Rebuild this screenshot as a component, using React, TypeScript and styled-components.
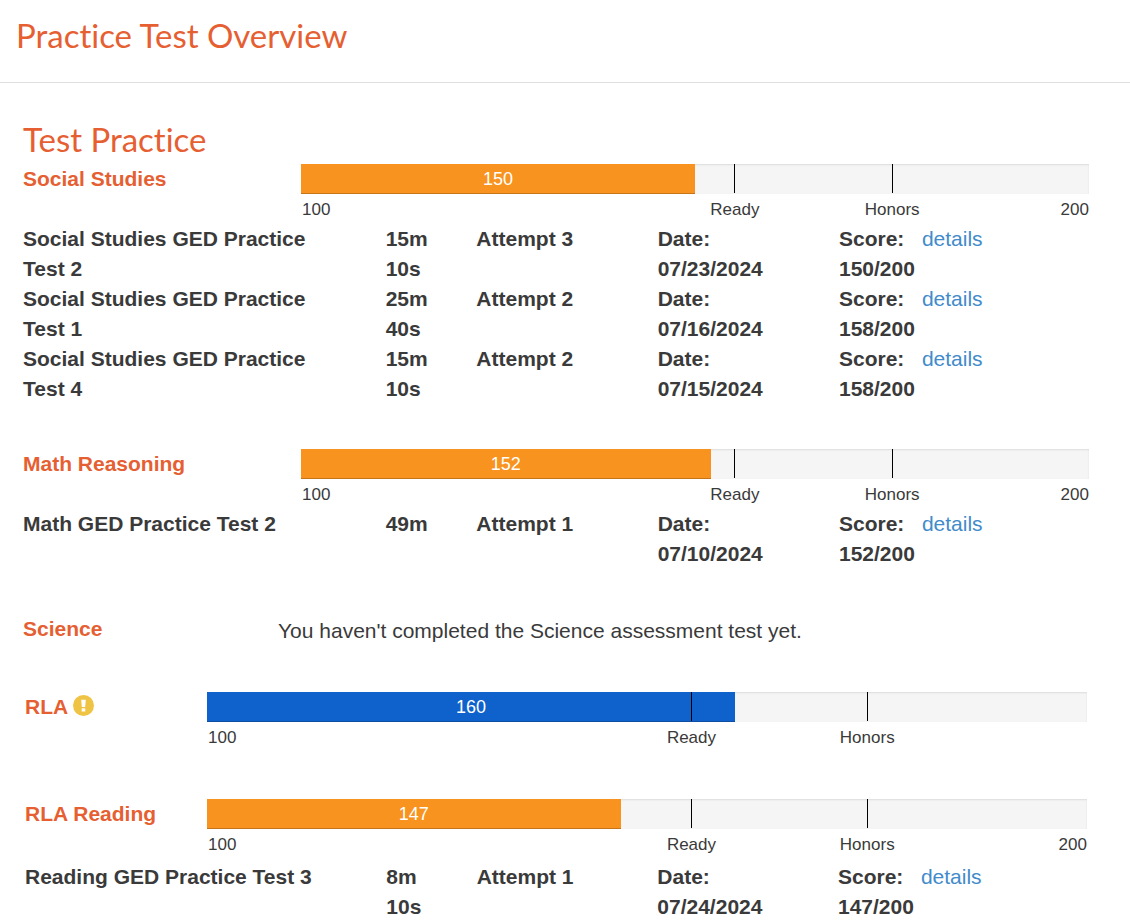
import React from "react";
import styled, { createGlobalStyle } from "styled-components";

const GlobalStyle = createGlobalStyle`
  *, *::before, *::after { box-sizing: border-box; }
  body {
    margin: 0;
    background: #fff;
    color: #3a3a3a;
    font-family: "Liberation Sans", Arial, sans-serif;
    font-size: 21px;
    line-height: 30px;
  }
`;

const Header = styled.header`
  padding: 15px 16px 27px;
  border-bottom: 1px solid #dfe0e1;
`;

const PageTitle = styled.h1`
  margin: 0;
  color: #e65f32;
  font-family: Lato, sans-serif;
  font-size: 33px;
  font-weight: 400;
  font-variant-ligatures: none;
  line-height: 40px;
`;

const Main = styled.main`
  padding: 36px 19px 0 23px;
`;

const SectionTitle = styled(PageTitle).attrs({ as: "h2" })`
  margin-bottom: 5px;
`;

const Subject = styled.section<{ $gap: number; $inset?: boolean }>`
  margin-bottom: ${(p) => p.$gap}px;
  padding: 0 ${(p) => (p.$inset ? 2 : 0)}px;

  &:last-child {
    margin-bottom: 0;
  }
`;

const SubjectHead = styled.div<{ $label: number; $below?: number }>`
  display: grid;
  grid-template-columns: ${(p) => p.$label}px 1fr;
  padding-right: 22px;
  margin-bottom: ${(p) => p.$below ?? 0}px;
`;

const SubjectName = styled.h3`
  display: flex;
  align-items: flex-start;
  gap: 5px;
  height: 30px;
  margin: 0;
  color: #e65f32;
  font-size: 21px;
  font-weight: 700;
  line-height: 30px;

  svg { margin-top: 3px; }
`;

const Message = styled.p`
  margin: 0;
  padding-top: 2px;
`;

const Track = styled.div`
  position: relative;
  height: 30px;
  background: #f5f5f5;
  box-shadow: inset 0 1px 2px rgba(0, 0, 0, 0.1);
`;

const Fill = styled.div<{ $tone: Tone }>`
  height: 100%;
  background: ${(p) => (p.$tone === "blue" ? "#0f62cb" : "#f7931e")};
  box-shadow: inset 0 -1px 0 rgba(0, 0, 0, 0.2);
  color: #fff;
  font-size: 18px;
  text-align: center;
`;

const Mark = styled.span<{ $at: number }>`
  position: absolute;
  top: 0;
  left: ${(p) => p.$at}%;
  width: 1px;
  height: 29px;
  background: #000;
`;

const Scale = styled.div`
  display: grid;
  grid-template-columns: 45% 20% 20% 15%;
  height: 30px;
  padding: 1px 0 0 1px;
  font-size: 17px;
  line-height: 29px;
  text-align: center;

  span:first-child { text-align: left; }
  span:last-child { text-align: right; }
`;

const Attempts = styled.table`
  width: 100%;
  table-layout: fixed;
  border-collapse: collapse;
  font-weight: 700;

  td {
    padding: 0;
    vertical-align: top;
  }
`;

const NameCell = styled.td`
  && { padding-right: 36px; }
`;

const TimeCell = styled.td`
  && { padding-right: 30px; }
`;

const Line = styled.span`
  display: block;
`;

const ScoreGroup = styled.div`
  display: flex;
  gap: 7px;
`;

const DetailsLink = styled.a`
  color: #428bca;
  font-weight: 400;
  text-decoration: none;

  &:hover { text-decoration: underline; }
`;

type Tone = "orange" | "blue";

interface Attempt {
  name: string;
  time: string;
  attempt: number;
  date: string;
  score: number;
}

function ScoreBar({ score, tone = "orange", showMax = true }: { score: number; tone?: Tone; showMax?: boolean }) {
  return (
    <div>
      <Track role="meter" aria-label="Score" aria-valuemin={100} aria-valuemax={200} aria-valuenow={score}>
        <Fill $tone={tone} style={{ width: `${score - 100}%` }}>{score}</Fill>
        <Mark $at={55} />
        <Mark $at={75} />
      </Track>
      <Scale>
        <span>100</span>
        <span>Ready</span>
        <span>Honors</span>
        <span>{showMax ? "200" : ""}</span>
      </Scale>
    </div>
  );
}

function AttemptTable({ rows }: { rows: Attempt[] }) {
  return (
    <Attempts>
      <colgroup>
        <col style={{ width: "33.333%" }} />
        <col style={{ width: "8.333%" }} />
        <col style={{ width: "16.667%" }} />
        <col style={{ width: "16.667%" }} />
        <col style={{ width: "25%" }} />
      </colgroup>
      <tbody>
        {rows.map((r) => (
          <tr key={r.name}>
            <NameCell>{r.name}</NameCell>
            <TimeCell>{r.time}</TimeCell>
            <td>Attempt {r.attempt}</td>
            <td>
              <Line>Date:</Line>
              <Line>{r.date}</Line>
            </td>
            <td>
              <ScoreGroup>
                <div>
                  <Line>Score:</Line>
                  <Line>{r.score}/200</Line>
                </div>
                <DetailsLink href="#details">details</DetailsLink>
              </ScoreGroup>
            </td>
          </tr>
        ))}
      </tbody>
    </Attempts>
  );
}

function AlertIcon() {
  return (
    <svg width="21" height="21" viewBox="0 0 21 21" role="img" aria-label="Notice">
      <circle cx="10.5" cy="10.5" r="10.5" fill="#efc445" />
      <path d="M8.2 4.8h4.6l-.6 7.2H8.8z" fill="#fff" />
      <rect x="8.7" y="13.3" width="3.6" height="3.3" rx=".6" fill="#fff" />
    </svg>
  );
}

const socialStudies: Attempt[] = [
  { name: "Social Studies GED Practice Test 2", time: "15m 10s", attempt: 3, date: "07/23/2024", score: 150 },
  { name: "Social Studies GED Practice Test 1", time: "25m 40s", attempt: 2, date: "07/16/2024", score: 158 },
  { name: "Social Studies GED Practice Test 4", time: "15m 10s", attempt: 2, date: "07/15/2024", score: 158 },
];

const math: Attempt[] = [
  { name: "Math GED Practice Test 2", time: "49m", attempt: 1, date: "07/10/2024", score: 152 },
];

const reading: Attempt[] = [
  { name: "Reading GED Practice Test 3", time: "8m 10s", attempt: 1, date: "07/24/2024", score: 147 },
];

export default function App() {
  return (
    <>
      <GlobalStyle />
      <Header>
        <PageTitle>Practice Test Overview</PageTitle>
      </Header>
      <Main>
        <SectionTitle>Test Practice</SectionTitle>

        <Subject $gap={45}>
          <SubjectHead $label={278}>
            <SubjectName>Social Studies</SubjectName>
            <ScoreBar score={150} />
          </SubjectHead>
          <AttemptTable rows={socialStudies} />
        </Subject>

        <Subject $gap={45}>
          <SubjectHead $label={278}>
            <SubjectName>Math Reasoning</SubjectName>
            <ScoreBar score={152} />
          </SubjectHead>
          <AttemptTable rows={math} />
        </Subject>

        <Subject $gap={46}>
          <SubjectHead $label={255}>
            <SubjectName>Science</SubjectName>
            <Message>You haven't completed the Science assessment test yet.</Message>
          </SubjectHead>
        </Subject>

        <Subject $gap={47} $inset>
          <SubjectHead $label={182}>
            <SubjectName>
              RLA
              <AlertIcon />
            </SubjectName>
            <ScoreBar score={160} tone="blue" showMax={false} />
          </SubjectHead>
        </Subject>

        <Subject $gap={0} $inset>
          <SubjectHead $label={182} $below={3}>
            <SubjectName>RLA Reading</SubjectName>
            <ScoreBar score={147} />
          </SubjectHead>
          <AttemptTable rows={reading} />
        </Subject>
      </Main>
    </>
  );
}
